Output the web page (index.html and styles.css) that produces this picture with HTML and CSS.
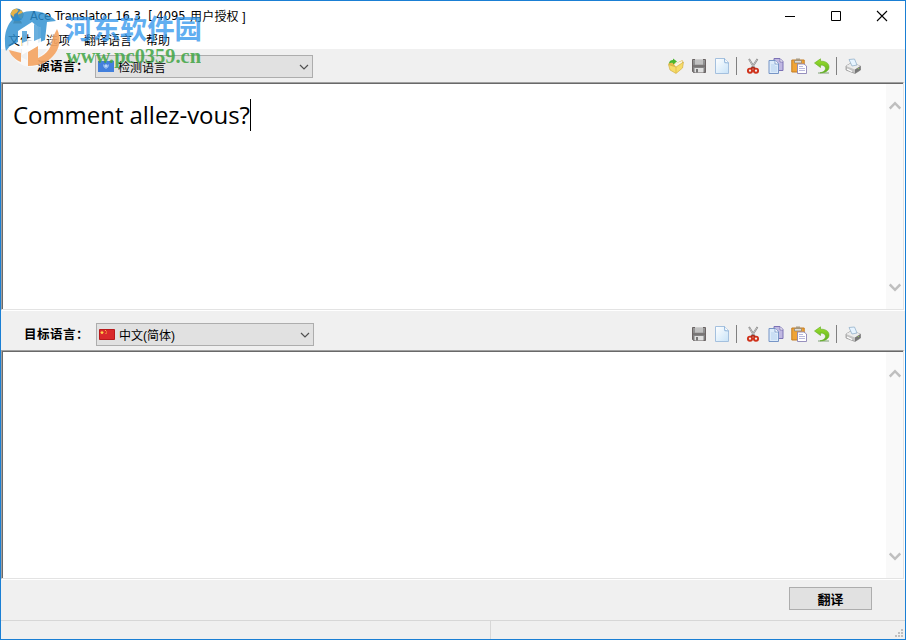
FILE: index.html
```html
<!DOCTYPE html>
<html lang="zh-CN">
<head>
    <meta charset="UTF-8">
    <title>Ace Translator</title>
    <link rel="stylesheet" href="styles.css">
</head>
<body>
    <svg class="defs" width="0" height="0">
        <defs>
            <linearGradient id="blueGrad" x1="0" y1="0" x2="1" y2="1">
                <stop offset="0" stop-color="#fff"/><stop offset="1" stop-color="#c8e3f8"/>
            </linearGradient>
            <linearGradient id="greenGrad" x1="0" y1="0" x2="0" y2="1">
                <stop offset="0" stop-color="#9be02b"/><stop offset="1" stop-color="#5fae22"/>
            </linearGradient>
            <linearGradient id="grayGrad" x1="0" y1="0" x2="0" y2="1">
                <stop offset="0" stop-color="#9a9a9a"/><stop offset="1" stop-color="#777"/>
            </linearGradient>
            <symbol id="open" viewBox="0 0 16 16">
                <path d="M.5 5l5-1 2 1.500L14.500 2l.5 4-5 3-9-1z" fill="#e3bd4a"/>
                <path d="M6 6l8-3 .5 4-5 4z" fill="#f8f6e4"/>
                <path d="M.5 6.500L8 9l7.500-5-1 6L8 15.500 2 12z" fill="#f6dc68" stroke="#cda63a" stroke-width=".6"/>
                <path d="M8 9v6" stroke="#e0b945" stroke-width=".8"/>
                <path d="M1 5.500C1 3 3 2 5 2V.5l4 3-4 3V5C3.500 4.500 2 5 1 5.500z" fill="#48b52d"/>
            </symbol>
            <symbol id="save" viewBox="0 0 16 16">
                <path d="M1.500 1.500h13v13H2.500l-1-1z" fill="url(#grayGrad)" stroke="#6b6464"/>
                <path d="M4 1h8v5.500H4z" fill="#d0d0d0"/>
                <path d="M4 3h8M4 5h8" stroke="#b2b2b2"/>
                <path d="M3.500 10h9v4.500h-9z" fill="#e0e0e0"/>
                <path d="M5 11h2v3.500H5z" fill="#777"/>
                <path d="M2 8h12" stroke="#6b6464"/>
            </symbol>
            <symbol id="new" viewBox="0 0 16 16">
                <path d="M1.500.5h9l4 4v11h-13z" fill="url(#blueGrad)" stroke="#a4c0de"/>
                <path d="M10.500.5l.3 4.200 3.700.2" fill="#fff" stroke="#7fa9d4" stroke-width=".9"/>
            </symbol>
            <symbol id="cut" viewBox="0 0 16 16">
                <path d="M4 1l6 10M12.500 1L6 11" stroke="#858585" stroke-width="1.800"/>
                <path d="M4.300 1.500l4 7M12 1.500L8 8" stroke="#d2d2d2" stroke-width=".8"/>
                <ellipse cx="5" cy="12.700" rx="2.100" ry="2.100" fill="none" stroke="#cf321b" stroke-width="1.900"/>
                <ellipse cx="11" cy="12.700" rx="2.100" ry="2.100" fill="none" stroke="#cf321b" stroke-width="1.900"/>
                <path d="M6 10.500l2-1 2 1" fill="none" stroke="#b42714" stroke-width="1.500"/>
            </symbol>
            <symbol id="copy" viewBox="0 0 16 16">
                <path d="M6 .5h6l3 3v9H6z" fill="#c0b8e2" stroke="#7c72b5"/>
                <path d="M12 1v3h3" fill="#fff" stroke="#7167ab" stroke-width=".7"/>
                <path d="M1 2.500h6l3.500 3v10H1z" fill="#dcebfa" stroke="#7795c6"/>
                <path d="M3 7h4M3 9h6M3 11h6M3 13h6" stroke="#b6d1ee"/>
                <path d="M7 2.500V6h3.500" fill="#fff" stroke="#6587bd" stroke-width=".7"/>
            </symbol>
            <symbol id="paste" viewBox="0 0 16 16">
                <path d="M.8 2h12.400v12H.8z" fill="#f0a436" stroke="#c47d24"/>
                <path d="M3.500 2.500h7V5h-7z" fill="#ddd" stroke="#8e8065" stroke-width=".7"/>
                <path d="M5 .5h4v2H5z" fill="#a89a82"/>
                <path d="M6.500 6h6.500l2.500 2v7.500h-9z" fill="#fff" stroke="#8b83b5" stroke-width=".9"/>
                <path d="M8 8.500h4M8 10.500h6M8 12.500h6" stroke="#b9b8dc"/>
            </symbol>
            <symbol id="undo" viewBox="0 0 16 16">
                <path d="M4 15h11" stroke="#abc0a4" stroke-width="1.600"/>
                <path d="M.5 5L6.500.8v2.400C12 3 15 5.500 15 9c0 3.500-3 5.800-9 5.800 4-.8 5.500-2.500 5.500-4.500S9.500 7 6.500 7v2.500z" fill="url(#greenGrad)" stroke="#62ad21" stroke-width=".6"/>
            </symbol>
            <symbol id="print" viewBox="0 0 16 16">
                <path d="M1 8l5-3 9.500 3v4L10 15.500 1 12z" fill="#c4c4c4" stroke="#8d8d8d" stroke-width=".7"/>
                <path d="M1 8l9 3.500L15.500 8 6.500 5z" fill="#ececec"/>
                <path d="M10 11.500L15.500 8v4L10 15.500z" fill="#777"/>
                <path d="M4 1.500L9.500 1 12 7 7 8z" fill="#e7f4ff" stroke="#8aa9c4" stroke-width=".7"/>
                <path d="M2 11l5 2.500" stroke="#fff" stroke-width="1.300"/>
                <circle cx="13.300" cy="10.500" r=".6" fill="#9bda57"/>
            </symbol>
            <symbol id="chevron" viewBox="0 0 12 8">
                <path d="M2 2l4 4 4-4" fill="none" stroke="currentColor" stroke-width="1.200"/>
            </symbol>
            <symbol id="scroll" viewBox="0 0 12 9">
                <path d="M.7 7.500L6 2.200l5.300 5.300" fill="none" stroke="#bfbfbf" stroke-width="2.500"/>
            </symbol>
        </defs>
    </svg>

    <div class="window">
        <header class="titlebar">
            <svg class="app-icon" viewBox="0 0 16 16">
                <circle cx="8" cy="7" r="6.500" fill="#4388b8"/>
                <path d="M1.500 6l2-4 4-1.500 2 2-2 2.500-2 1-1 3zM9 5l3-3 2.500 4-2 5-3-2z" fill="#e6b348"/>
                <path d="M5 13h7l1 2.500H4z" fill="#b98b4d"/>
            </svg>
            <span class="title">Ace Translator 16.3&nbsp; [ 4095</span>
            <span class="title-cn">用户授权 ]</span>
            <div class="controls">
                <svg viewBox="0 0 12 12"><path d="M1 6.500h10" stroke="#000"/></svg>
                <svg viewBox="0 0 12 12"><path d="M1.500 1.500h9v9h-9z" fill="none" stroke="#000"/></svg>
                <svg viewBox="0 0 12 12"><path d="M1 1l10 10M11 1L1 11" stroke="#000" stroke-width="1.100"/></svg>
            </div>
        </header>

        <nav class="menu">
            <span>文件</span>
            <span>选项</span>
            <span>翻译语言</span>
            <span>帮助</span>
        </nav>

        <div class="toolbar source">
            <label>源语言：</label>
            <div class="select">
                <svg class="flag" viewBox="0 0 16 11">
                    <path d="M0 0h16v11H0z" fill="#427fdc"/>
                    <circle cx="8" cy="5" r="1.800" fill="#b9d5f6"/>
                    <path d="M5.500 3.500c0 5 5 5 5 0" fill="none" stroke="#a9c8f3" stroke-width=".8"/>
                </svg>
                <span>检测语言</span>
                <svg class="arrow"><use href="#chevron"/></svg>
            </div>
            <div class="tools">
                <svg><use href="#open"/></svg>
                <svg><use href="#save"/></svg>
                <svg><use href="#new"/></svg>
                <i></i>
                <svg><use href="#cut"/></svg>
                <svg><use href="#copy"/></svg>
                <svg><use href="#paste"/></svg>
                <svg><use href="#undo"/></svg>
                <i></i>
                <svg><use href="#print"/></svg>
            </div>
        </div>

        <div class="pane">
            <div class="text"><span>Comment allez-vous?</span></div>
            <div class="scrollbar">
                <svg><use href="#scroll"/></svg>
                <svg class="down"><use href="#scroll"/></svg>
            </div>
        </div>

        <div class="toolbar target">
            <label>目标语言：</label>
            <div class="select">
                <svg class="flag" viewBox="0 0 16 11">
                    <path d="M.5.5h15v10H.5z" fill="#d9292b" stroke="#b8191b"/>
                    <path d="M3 1.500l.6 1.300 1.400.1-1.100 1 .3 1.400L3 4.600l-1.200.7.3-1.400-1.100-1 1.400-.1z" fill="#ffd84a"/>
                    <path d="M6 1.500h1M7 3h1M6.500 4.500h1" stroke="#f5b63f"/>
                </svg>
                <span>中文(简体)</span>
                <svg class="arrow"><use href="#chevron"/></svg>
            </div>
            <div class="tools">
                <svg><use href="#save"/></svg>
                <svg><use href="#new"/></svg>
                <i></i>
                <svg><use href="#cut"/></svg>
                <svg><use href="#copy"/></svg>
                <svg><use href="#paste"/></svg>
                <svg><use href="#undo"/></svg>
                <i></i>
                <svg><use href="#print"/></svg>
            </div>
        </div>

        <div class="pane result">
            <div class="text"></div>
            <div class="scrollbar">
                <svg><use href="#scroll"/></svg>
                <svg class="down"><use href="#scroll"/></svg>
            </div>
        </div>

        <div class="actions">
            <button type="button">翻译</button>
        </div>

        <footer class="status">
            <div class="cell"></div>
            <svg class="grip" viewBox="0 0 8 8">
                <path d="M6 0h2v2H6zM3 3h2v2H3zM6 3h2v2H6zM0 6h2v2H0zM3 6h2v2H3zM6 6h2v2H6z" fill="#bfbfbf"/>
            </svg>
        </footer>
    </div>

    <!-- site mark over the top left corner -->
    <svg class="mark" width="210" height="75" viewBox="0 0 210 75">
        <path d="M9 49h12v8l6 3V45c4-1 8-3 11-5v17c7-3 12-10 13-21l6-7c7 16-2 35-25 38-10 0-19-6-23-18z" fill="#fff" opacity=".55"/>
        <path d="M5 42C4 23 17 11 32 11c10 0 18 4 24 10l-9 1-2 18-7 3V27l-6-5-14 9v11l-8 4-4 5c-1-3-1-6-1-9z" fill="#2b8dd0" opacity=".82"/>
        <path d="M22 30l5-2v11l8-4V25l6 3v17l-14 7-5 3z" fill="#fff" opacity=".85"/>
        <path d="M22 31h5v10l-5 2zM34 24l7 4v10l-7 3z" fill="#2b8dd0" opacity=".7"/>
        <path d="M9 50l12 3v9C16 60 11 56 9 50zM28 66V52l10-6v12c10-4 14-12 15-21l4-8c8 16-3 37-29 37z" fill="#f39a50" opacity=".82"/>
        <text class="mark-cn" x="65" y="39" textLength="137" lengthAdjust="spacingAndGlyphs">河东软件园</text>
        <text class="mark-url" x="66" y="63" textLength="135" lengthAdjust="spacingAndGlyphs">www.pc0359.cn</text>
    </svg>
</body>
</html>
```
FILE: styles.css
```css
* {
    box-sizing: border-box;
}

body {
    margin: 0;
    font-family: "Liberation Sans", "Noto Sans CJK SC", sans-serif;
    font-size: 12px;
    color: #000;
}

svg {
    display: block;
    flex: none;
}

.defs {
    position: absolute;
}

.window {
    display: flex;
    flex-direction: column;
    width: 906px;
    height: 640px;
    border: 1px solid #1a7fd4;
    background-color: #f0f0f0;
    overflow: hidden;
}

.titlebar {
    display: flex;
    align-items: center;
    height: 29px;
    padding-left: 8px;
    background-color: #fff;
    white-space: nowrap;
}

.app-icon {
    width: 16px;
    height: 16px;
    margin-right: 5px;
}

.title {
    font-family: "DejaVu Sans", sans-serif;
    font-size: 11.5px;
    width: 160px;
}

.title-cn {
    letter-spacing: 0.2px;
}

.controls {
    display: flex;
    gap: 34px;
    margin-left: auto;
    padding-right: 17px;
}

.controls svg {
    width: 12px;
    height: 12px;
}

.menu {
    display: flex;
    gap: 14px;
    height: 19px;
    padding-left: 7px;
    line-height: 23px;
    background-color: #fff;
}

.toolbar {
    display: flex;
    align-items: flex-start;
    flex: none;
    padding-right: 44px;
}

.toolbar label {
    font-size: 12.5px;
    font-weight: bold;
    line-height: 25px;
    letter-spacing: 0.5px;
    white-space: nowrap;
}

.source {
    height: 33px;
    padding-left: 36px;
    padding-top: 6px;
}

.source label {
    width: 58px;
}

.target {
    height: 40px;
    padding-left: 23px;
    padding-top: 13px;
}

.target label {
    width: 72px;
}

.select {
    display: flex;
    align-items: center;
    width: 218px;
    height: 23px;
    padding: 0 2px;
    border: 1px solid #adadad;
    background-color: #e1e1e1;
}

.flag {
    width: 16px;
    height: 11px;
    margin-right: 4px;
}

.arrow {
    width: 12px;
    height: 8px;
    margin-left: auto;
    color: #505050;
}

.tools {
    display: flex;
    align-items: center;
    gap: 7px;
    height: 22px;
    margin-left: auto;
}

.tools svg {
    width: 16px;
    height: 16px;
}

.tools i {
    width: 1px;
    height: 18px;
    margin: 0 1px 0 -1px;
    background-color: #808080;
}

.pane {
    display: flex;
    flex: none;
    width: 903px;
    height: 228px;
    border: 1px solid;
    border-color: #a0a0a0 #e3e3e3 #e3e3e3 #a0a0a0;
    box-shadow: 1px 1px #fff;
    background-color: #fff;
}

.result {
    height: 229px;
}

.text {
    flex: 1;
    padding: 15px 10px;
    border-top: 1px solid #696969;
    border-left: 1px solid #696969;
    font-family: "Open Sans", sans-serif;
    font-size: 24px;
    line-height: 31px;
}

.text span {
    display: inline-block;
    width: 238px;
    height: 32px;
    border-right: 1px solid #000;
    letter-spacing: -0.05px;
    white-space: nowrap;
}

.scrollbar {
    display: flex;
    flex-direction: column;
    justify-content: space-between;
    align-items: center;
    width: 17px;
    padding: 17px 0 17px 0;
    border-top: 1px solid #696969;
    background-color: #f9f9f9;
}

.scrollbar svg {
    width: 12px;
    height: 9px;
}

.down {
    transform: rotate(180deg);
}

.actions {
    display: flex;
    justify-content: flex-end;
    flex: 1;
    padding: 8px 33px 0 0;
}

.actions button {
    width: 83px;
    height: 23px;
    padding: 0;
    border: 1px solid #adadad;
    background-color: #e1e1e1;
    font: bold 13px/20px "Noto Sans CJK SC", sans-serif;
    color: #000;
}

.status {
    display: flex;
    justify-content: space-between;
    align-items: flex-end;
    flex: none;
    height: 19px;
    border-top: 1px solid #d7d7d7;
}

.cell {
    width: 490px;
    height: 18px;
    border-right: 1px solid #d7d7d7;
}

.grip {
    width: 8px;
    height: 8px;
    margin: 0 2px 2px 0;
}

.mark {
    position: absolute;
    top: 0;
    left: 0;
    pointer-events: none;
}

.mark-cn {
    font: bold 27px "Noto Sans CJK SC", sans-serif;
    fill: #2d93eb;
    opacity: 0.75;
}

.mark-url {
    font: bold 20px "Liberation Serif", serif;
    fill: #41a545;
    opacity: 0.85;
}
```
